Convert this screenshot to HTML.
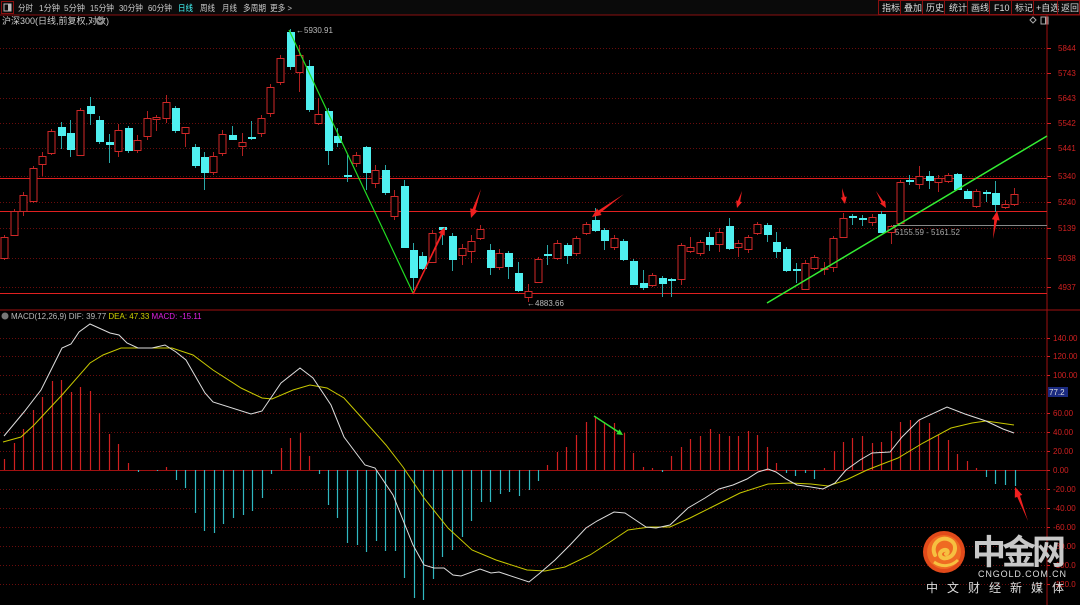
<!DOCTYPE html>
<html><head><meta charset="utf-8"><style>
html,body{margin:0;padding:0;background:#000;width:1080px;height:605px;overflow:hidden}
svg{display:block}
text{font-family:"Liberation Sans","Noto Sans CJK SC",sans-serif}
</style></head><body>
<svg id="s" width="1080" height="605" viewBox="0 0 1080 605" xmlns="http://www.w3.org/2000/svg">
<rect width="1080" height="605" fill="#000"/>
<rect x="0" y="0" width="1080" height="15" fill="#0a0a0a"/>
<line x1="0" y1="15" x2="1080" y2="15" stroke="#8a1010" stroke-width="1"/>
<rect x="1.5" y="1.5" width="12" height="12" fill="none" stroke="#8a1010"/>
<rect x="4" y="4" width="7" height="7" fill="none" stroke="#bbb" stroke-width="1"/>
<rect x="8" y="4" width="3" height="7" fill="#bbb"/>
<g font-size="8.5" fill="#ccc" lengthAdjust="spacingAndGlyphs">
<text x="18" y="11" textLength="15" lengthAdjust="spacingAndGlyphs">分时</text>
<text x="39" y="11" textLength="21" lengthAdjust="spacingAndGlyphs">1分钟</text>
<text x="64" y="11" textLength="21" lengthAdjust="spacingAndGlyphs">5分钟</text>
<text x="90" y="11" textLength="24" lengthAdjust="spacingAndGlyphs">15分钟</text>
<text x="119" y="11" textLength="24" lengthAdjust="spacingAndGlyphs">30分钟</text>
<text x="148" y="11" textLength="24" lengthAdjust="spacingAndGlyphs">60分钟</text>
<text x="178" y="11" fill="#4ff" textLength="15" lengthAdjust="spacingAndGlyphs">日线</text>
<text x="200" y="11" textLength="15" lengthAdjust="spacingAndGlyphs">周线</text>
<text x="222" y="11" textLength="15" lengthAdjust="spacingAndGlyphs">月线</text>
<text x="243" y="11" textLength="23" lengthAdjust="spacingAndGlyphs">多周期</text>
<text x="270" y="11" textLength="22" lengthAdjust="spacingAndGlyphs">更多 &gt;</text>
</g>
<g font-size="9" fill="#ddd">
<rect x="878.5" y="0.5" width="22" height="14" fill="none" stroke="#8a1010"/><text x="882" y="11">指标</text>
<rect x="900.5" y="0.5" width="22" height="14" fill="none" stroke="#8a1010"/><text x="904" y="11">叠加</text>
<rect x="922.5" y="0.5" width="22" height="14" fill="none" stroke="#8a1010"/><text x="926" y="11">历史</text>
<rect x="944.5" y="0.5" width="23" height="14" fill="none" stroke="#8a1010"/><text x="949" y="11">统计</text>
<rect x="967.5" y="0.5" width="22" height="14" fill="none" stroke="#8a1010"/><text x="971" y="11">画线</text>
<rect x="989.5" y="0.5" width="22" height="14" fill="none" stroke="#8a1010"/><text x="994" y="11">F10</text>
<rect x="1011.5" y="0.5" width="22" height="14" fill="none" stroke="#8a1010"/><text x="1015" y="11">标记</text>
<rect x="1033.5" y="0.5" width="24" height="14" fill="none" stroke="#8a1010"/><text x="1036" y="11">+自选</text>
<rect x="1057.5" y="0.5" width="22" height="14" fill="none" stroke="#8a1010"/><text x="1061" y="11">返回</text>
</g>
<text x="2" y="24" font-size="9" fill="#ccc">沪深300(日线,前复权,对数)</text>
<circle cx="100" cy="21" r="4" fill="#888"/>
<path d="M98 20 L100 22 L102 20" stroke="#000" fill="none"/>
<path d="M1030 20 L1033 23 L1036 20 L1033 17 Z" fill="none" stroke="#aaa"/>
<rect x="1041" y="17" width="7" height="7" fill="none" stroke="#aaa"/><rect x="1045" y="17" width="3" height="7" fill="#aaa"/>
<g id="grid"></g>
<line x1="1047" y1="15" x2="1047" y2="605" stroke="#a01010"/>
<line x1="0" y1="310" x2="1047" y2="310" stroke="#a01010"/>
<line x1="1047" y1="310" x2="1080" y2="310" stroke="#a01010"/>
<line x1="0" y1="178.5" x2="1047" y2="178.5" stroke="#e02020"/>
<line x1="0" y1="211.5" x2="1047" y2="211.5" stroke="#e02020"/>
<line x1="0" y1="293.5" x2="1047" y2="293.5" stroke="#e02020"/>
<line x1="893" y1="225.5" x2="1047" y2="225.5" stroke="#888"/>
<g id="cand"></g>
<g id="macd"></g>
<polyline id="dea" fill="none" stroke="#c8c800" stroke-width="1"/>
<polyline id="dif" fill="none" stroke="#ddd" stroke-width="1"/>
<line x1="289" y1="30" x2="413" y2="293" stroke="#22dd22" stroke-width="1.2"/>
<line x1="767" y1="303" x2="1047" y2="136" stroke="#33ee33" stroke-width="1.5"/>
<g id="arr"></g>
<g font-size="8" fill="#bbb">
<text x="296" y="33">←5930.91</text>
<text x="527" y="306">←4883.66</text>
<text x="895" y="235" fill="#aaa">5155.59 - 5161.52</text>
</g>
<g font-size="8" fill="#d02020" id="ylab"></g>
<circle cx="5" cy="316" r="3.5" fill="#777"/>
<text x="11" y="319" font-size="8" fill="#bbb">MACD(12,26,9) DIF: 39.77 <tspan fill="#d0d000">DEA: 47.33</tspan> <tspan fill="#e020e0">MACD: -15.11</tspan></text>
<rect x="1048" y="387" width="20" height="10" fill="#1a2a80"/>
<text x="1049" y="395" font-size="8" fill="#ddd">77.2</text>
<circle cx="944" cy="552" r="21" fill="#e24a1a"/>
<circle cx="944" cy="552" r="17" fill="#ef6a22"/>
<path d="M935 555 C930 545 940 535 950 540 C958 544 956 556 947 558 C940 560 937 552 944 550 C948 549 949 553 946 554" stroke="#f6c040" stroke-width="4" fill="none" stroke-linecap="round"/>
<path d="M934 562 C942 568 952 566 958 560" stroke="#f6c040" stroke-width="3" fill="none"/>
<text x="972" y="564" font-size="34" font-weight="bold" fill="#c8c8c8" style="font-family:'Noto Sans CJK SC',sans-serif" textLength="94">中金网</text>
<text x="978" y="577" font-size="9" fill="#ddd" textLength="88">CNGOLD.COM.CN</text>
<text x="926" y="592" font-size="12" fill="#ddd" style="font-family:'Noto Sans CJK SC',sans-serif" textLength="138">中文财经新媒体</text>
</svg>
<script>
var NS="http://www.w3.org/2000/svg";
function el(p,t,a){var e=document.createElementNS(NS,t);for(var k in a)e.setAttribute(k,a[k]);document.getElementById(p).appendChild(e);return e;}
[48,73,98,123,148,176,202,228,258,287,338,356,375,394,413,432,451,489,508,527,546,565,584].forEach(function(y){el("grid","line",{x1:0,y1:y+.5,x2:1047,y2:y+.5,stroke:"#6a0c0c","stroke-dasharray":"1,2"});});
el("grid","line",{x1:0,y1:470.5,x2:1047,y2:470.5,stroke:"#a01010"});
var pl=[[48,"5844"],[73,"5743"],[98,"5643"],[123,"5542"],[148,"5441"],[176,"5340"],[202,"5240"],[228,"5139"],[258,"5038"],[287,"4937"]];
pl.forEach(function(p){var t=el("ylab","text",{x:1058,y:p[0]+3});t.textContent=p[1];el("ylab","line",{x1:1047,y1:p[0]+.5,x2:1051,y2:p[0]+.5,stroke:"#d02020"});});
var ml=[[338,"140.00"],[356,"120.00"],[375,"100.00"],[413,"60.00"],[432,"40.00"],[451,"20.00"],[470,"0.00"],[489,"-20.00"],[508,"-40.00"],[527,"-60.00"],[546,"-80.00"],[565,"-100.0"],[584,"-120.0"]];
ml.forEach(function(p){var t=el("ylab","text",{x:1053,y:p[0]+3});t.textContent=p[1];el("ylab","line",{x1:1047,y1:p[0]+.5,x2:1050,y2:p[0]+.5,stroke:"#d02020"});});
var C=[[4,237,258,235,260,'r'],[14,211,235,209,236,'r'],[23,195,211,192,216,'r'],[33,168,201,166,203,'r'],[42,156,164,152,176,'r'],[51,131,153,129,155,'r'],[61,127,135,122,149,'c'],[70,133,149,120,157,'c'],[80,110,155,108,156,'r'],[90,106,113,97,125,'c'],[99,120,141,116,144,'c'],[109,142,144,134,163,'c'],[118,130,151,124,157,'r'],[128,128,150,126,153,'c'],[137,140,150,135,153,'r'],[147,118,136,111,140,'r'],[156,117,119,115,131,'r'],[166,102,118,95,123,'r'],[175,108,130,106,133,'c'],[185,127,133,127,147,'r'],[195,147,165,144,168,'c'],[204,157,172,152,190,'c'],[213,156,172,152,175,'r'],[222,134,153,130,156,'r'],[232,135,139,126,140,'c'],[242,142,146,133,156,'r'],[251,137,138,121,140,'c'],[261,118,133,115,137,'r'],[270,87,113,84,117,'r'],[280,58,82,55,85,'r'],[290,32,66,29,70,'c'],[299,55,72,45,92,'r'],[309,66,109,60,112,'c'],[318,114,123,98,125,'r'],[328,111,150,108,165,'c'],[337,136,142,128,147,'c'],[347,175,176,155,182,'c'],[356,155,163,152,167,'r'],[366,147,172,146,190,'c'],[375,170,183,165,188,'r'],[385,170,192,165,195,'c'],[394,196,216,190,220,'r'],[404,186,247,180,248,'c'],[413,250,277,243,290,'c'],[422,256,268,252,270,'c'],[432,233,262,230,263,'r'],[442,227,229,227,245,'c'],[452,236,259,233,271,'c'],[462,248,255,244,265,'r'],[471,241,251,235,263,'r'],[480,229,238,225,240,'r'],[490,250,267,244,275,'c'],[499,253,267,249,270,'r'],[508,253,266,251,279,'c'],[518,273,290,262,292,'c'],[528,291,297,284,302,'r'],[538,259,282,257,283,'r'],[547,254,255,245,265,'c'],[557,243,258,240,260,'r'],[567,245,255,243,264,'c'],[576,238,253,236,256,'r'],[586,224,233,222,235,'r'],[595,220,230,208,232,'c'],[604,230,240,228,250,'c'],[614,238,247,235,250,'r'],[623,241,259,239,261,'c'],[633,261,284,259,285,'c'],[643,283,287,270,290,'c'],[652,275,285,273,287,'r'],[662,278,283,276,297,'c'],[671,279,280,278,297,'c'],[681,245,279,243,285,'r'],[690,247,251,237,253,'r'],[700,242,253,240,256,'r'],[709,237,244,232,251,'c'],[719,232,244,228,252,'r'],[729,226,248,218,250,'c'],[738,243,247,240,257,'r'],[748,237,249,235,253,'r'],[757,224,233,222,235,'r'],[767,225,234,223,242,'c'],[776,242,251,232,258,'c'],[786,249,270,247,272,'c'],[796,269,270,263,283,'c'],[805,263,289,260,290,'r'],[814,257,268,255,270,'r'],[824,268,269,262,275,'r'],[833,238,267,236,272,'r'],[843,218,237,213,238,'r'],[852,216,217,214,225,'c'],[862,218,219,215,226,'c'],[872,217,222,214,226,'r'],[881,214,232,211,233,'c'],[891,226,232,225,244,'r'],[900,182,223,180,224,'r'],[909,180,181,175,185,'c'],[919,176,184,166,189,'r'],[929,176,180,171,189,'c'],[938,178,182,175,192,'r'],[948,175,181,173,183,'r'],[957,174,189,173,190,'c'],[967,191,198,189,199,'c'],[976,191,206,189,208,'r'],[986,192,193,190,202,'c'],[995,193,204,181,212,'c'],[1005,204,207,200,209,'r'],[1014,194,204,188,206,'r']];
C.forEach(function(c){var x=c[0],col=c[5]=='r'?"#d02828":"#4ff0f0";
 el("cand","line",{x1:x+.5,y1:c[3],x2:x+.5,y2:c[4],stroke:c[5]=='r'?"#b02020":"#2aa8a8"});
 var h=Math.max(1,c[2]-c[1]);
 if(c[5]=='r'){el("cand","rect",{x:x-3,y:c[1]+.5,width:7,height:h,fill:"#000",stroke:col});}
 else{el("cand","rect",{x:x-3,y:c[1],width:8,height:h+1,fill:col});}
});
var B=[[4,459],[14,443],[23,429],[33,410],[42,397],[52,381],[61,380],[71,392],[80,387],[90,391],[99,413],[109,434],[118,444],[128,463],[138,472],[157,471],[166,467],[176,480],[185,488],[195,513],[204,531],[214,533],[223,524],[233,518],[243,515],[252,511],[262,498],[271,474],[281,448],[290,438],[300,433],[309,456],[319,474],[328,505],[337,518],[347,543],[357,545],[366,552],[376,541],[385,551],[395,551],[404,578],[414,598],[423,600],[433,579],[442,557],[452,550],[462,537],[471,521],[481,502],[490,502],[500,494],[509,492],[519,496],[529,490],[538,481],[547,465],[557,452],[566,447],[576,435],[586,422],[595,417],[604,422],[614,423],[624,433],[633,453],[643,467],[652,468],[662,472],[671,456],[681,447],[690,439],[700,436],[710,429],[719,434],[729,436],[738,436],[748,431],[757,435],[767,447],[776,463],[786,473],[795,476],[805,473],[814,479],[824,468],[834,451],[843,442],[852,438],[862,436],[872,443],[881,442],[891,431],[900,422],[910,420],[919,420],[929,423],[938,435],[948,440],[957,454],[967,461],[976,468],[986,477],[995,484],[1005,485],[1015,486]];
B.forEach(function(b){var up=b[1]<470;el("macd","line",{x1:b[0]+.5,y1:470,x2:b[0]+.5,y2:b[1],stroke:up?"#d02020":"#30b8c0","stroke-width":1.2});});
var dif=[[4,436],[24,412],[41,390],[52,368],[62,348],[71,344],[79,332],[90,324],[110,333],[119,335],[127,343],[138,348],[152,348],[165,345],[176,352],[186,360],[205,393],[213,402],[251,414],[262,411],[281,383],[300,368],[313,378],[331,405],[344,437],[365,465],[375,468],[393,495],[413,545],[424,565],[434,568],[444,568],[453,575],[461,576],[480,569],[491,573],[499,572],[529,582],[540,573],[555,560],[570,545],[586,528],[597,521],[614,512],[625,513],[646,527],[656,528],[670,525],[688,508],[705,498],[719,489],[733,485],[747,479],[758,472],[768,469],[776,472],[786,479],[797,485],[811,487],[823,489],[835,483],[846,470],[860,460],[872,453],[890,452],[902,437],[919,420],[947,407],[965,414],[986,421],[1003,429],[1014,433]];
var dea=[[3,442],[21,437],[34,425],[62,395],[90,363],[103,355],[121,348],[172,348],[193,355],[213,370],[241,388],[262,398],[272,399],[293,390],[310,385],[327,388],[344,398],[362,418],[386,445],[403,467],[424,498],[448,528],[472,550],[496,560],[527,570],[545,571],[565,567],[590,555],[610,542],[628,530],[650,527],[670,527],[690,518],[712,507],[740,493],[768,484],[790,483],[811,484],[828,486],[846,480],[867,470],[898,458],[923,443],[951,428],[972,423],[986,421],[1014,425]];
document.getElementById("dif").setAttribute("points",dif.map(function(p){return p.join(",")}).join(" "));
document.getElementById("dea").setAttribute("points",dea.map(function(p){return p.join(",")}).join(" "));
function arrow(x1,y1,x2,y2,col,w,hl,hw){var dx=x2-x1,dy=y2-y1,L=Math.sqrt(dx*dx+dy*dy),ux=dx/L,uy=dy/L,px=-uy,py=ux;
 var bx=x2-ux*hl,by=y2-uy*hl;
 var pts=[[x1,y1],[bx+px*w,by+py*w],[bx+px*hw,by+py*hw],[x2,y2],[bx-px*hw,by-py*hw],[bx-px*w,by-py*w]];
 el("arr","polygon",{points:pts.map(function(p){return p[0].toFixed(1)+","+p[1].toFixed(1)}).join(" "),fill:col});}
arrow(481,189,471,218,"#f02020",1.5,9,4);
arrow(624,194,592,217,"#f02020",1.5,9,4);
arrow(742,191,737,208,"#f02020",1.2,7,3);
arrow(842,188,845,204,"#f02020",1.2,7,3);
arrow(876,191,886,208,"#f02020",1.2,7,3);
arrow(993,239,997,211,"#f02020",1.5,9,4);
arrow(1028,521,1015,487,"#f02020",1.5,10,4);
arrow(413,294,445,227,"#f02020",0.9,8,3.5);
el("arr","line",{x1:413,y1:294,x2:443,y2:232,stroke:"#f02020","stroke-width":1.5});
arrow(594,416,623,435,"#30e030",0.8,6,3);
el("arr","line",{x1:594,y1:416,x2:620,y2:433,stroke:"#30e030","stroke-width":1.5});
</script>
</body></html>
